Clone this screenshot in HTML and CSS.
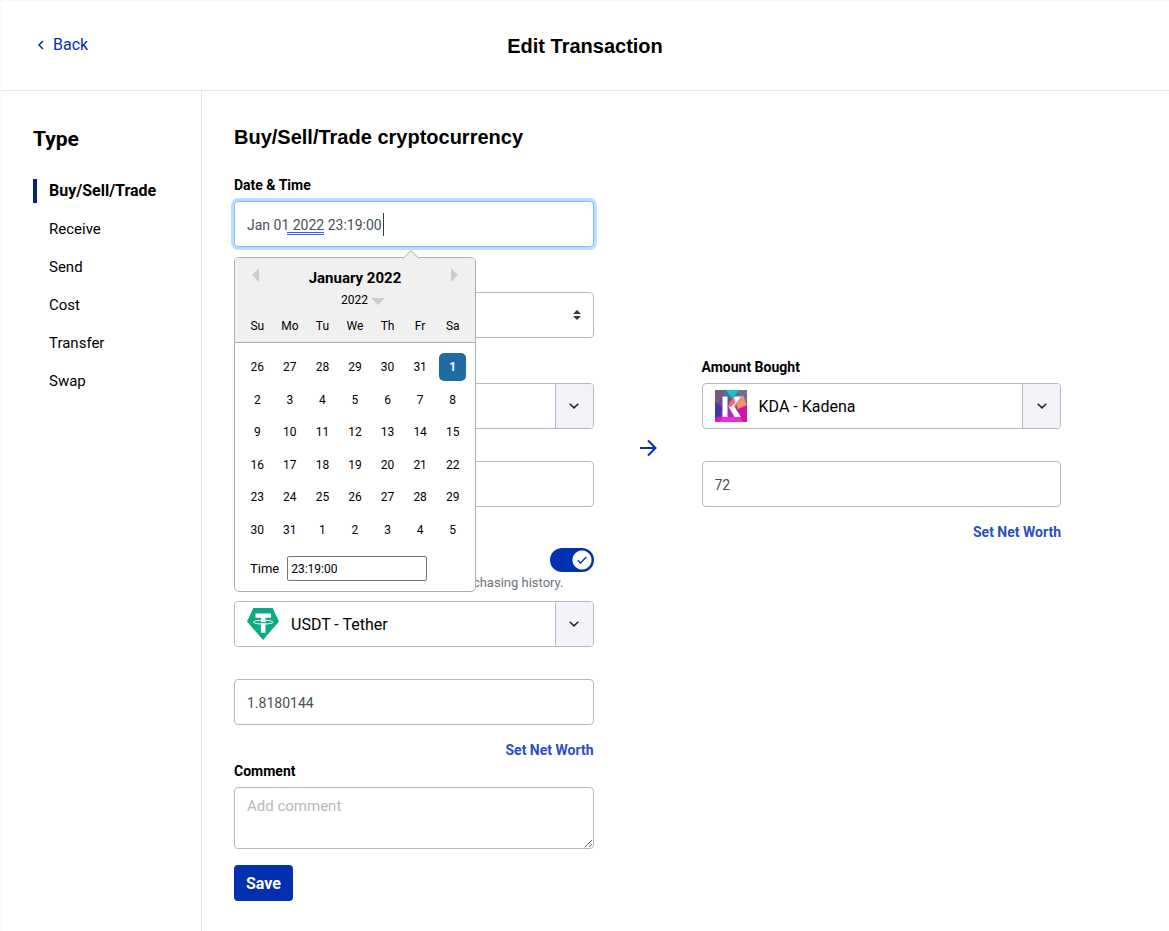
FILE: index.html
```html
<!DOCTYPE html>
<html lang="en">
<head>
<meta charset="utf-8">
<title>Edit Transaction</title>
<link rel="stylesheet" href="styles.css">
</head>
<body>
<div class="page">
  <header class="topbar">
    <a class="back" href="#"><svg width="8" height="10" viewBox="0 0 8 10"><path d="M6 1 2 5l4 4" fill="none" stroke="currentColor" stroke-width="1.5"/></svg>Back</a>
    <h1 class="title">Edit Transaction</h1>
  </header>
  <div class="body">
    <nav class="sidebar">
      <h2 class="side-title">Type</h2>
      <a class="side-link active" href="#">Buy/Sell/Trade</a>
      <a class="side-link" href="#">Receive</a>
      <a class="side-link" href="#">Send</a>
      <a class="side-link" href="#">Cost</a>
      <a class="side-link" href="#">Transfer</a>
      <a class="side-link" href="#">Swap</a>
    </nav>
    <main class="main">
      <h2 class="heading">Buy/Sell/Trade cryptocurrency</h2>
      <div class="half">
        <label class="label" for="date">Date &amp; Time</label>
        <div class="date-wrap">
          <input class="control focused" id="date" type="text" value="Jan 01 2022 23:19:00" spellcheck="false">
          <span class="grammar-mark"></span>
          <span class="caret"></span>
          <div class="picker">
            <svg class="picker-tip" width="18" height="9" viewBox="0 0 18 9"><path d="M0 9 9 0l9 9z" fill="#f0f0f0"/><path d="M1 8.500 9 .7l8 7.800" fill="none" stroke="#aeaeae"/></svg>
            <div class="picker-head">
              <div class="picker-nav">
                <button class="arrow-btn" type="button" aria-label="Previous month"><svg width="7" height="14" viewBox="0 0 7 14"><path d="M7 0v14L0 7z" fill="#ccc"/></svg></button>
                <div class="month">January 2022</div>
                <button class="arrow-btn" type="button" aria-label="Next month"><svg width="7" height="14" viewBox="0 0 7 14"><path d="M0 0v14l7-7z" fill="#ccc"/></svg></button>
              </div>
              <button class="year" type="button">2022<svg width="14" height="7" viewBox="0 0 14 7"><path d="M0 0h14L7 7z" fill="#ccc"/></svg></button>
              <div class="week"><span>Su</span><span>Mo</span><span>Tu</span><span>We</span><span>Th</span><span>Fr</span><span>Sa</span></div>
            </div>
            <div class="days">
              <button class="day">26</button><button class="day">27</button><button class="day">28</button><button class="day">29</button><button class="day">30</button><button class="day">31</button><button class="day selected">1</button>
              <button class="day">2</button><button class="day">3</button><button class="day">4</button><button class="day">5</button><button class="day">6</button><button class="day">7</button><button class="day">8</button>
              <button class="day">9</button><button class="day">10</button><button class="day">11</button><button class="day">12</button><button class="day">13</button><button class="day">14</button><button class="day">15</button>
              <button class="day">16</button><button class="day">17</button><button class="day">18</button><button class="day">19</button><button class="day">20</button><button class="day">21</button><button class="day">22</button>
              <button class="day">23</button><button class="day">24</button><button class="day">25</button><button class="day">26</button><button class="day">27</button><button class="day">28</button><button class="day">29</button>
              <button class="day">30</button><button class="day">31</button><button class="day">1</button><button class="day">2</button><button class="day">3</button><button class="day">4</button><button class="day">5</button>
            </div>
            <div class="time-row"><label for="time">Time</label><input class="time" id="time" type="text" value="23:19:00"></div>
          </div>
        </div>
        <div class="select-wrap">
          <select class="control" id="kind" aria-label="Trade type"><option></option></select>
          <svg class="updown" width="8" height="10" viewBox="0 0 8 10"><path d="M0 4 4 0l4 4zM0 6h8l-4 4z" fill="#343a40"/></svg>
        </div>
      </div>
      <div class="trade">
        <div class="side sold">
          <button class="coin" type="button" aria-label="Coin sold"><span class="coin-main"></span><span class="coin-toggle"><svg width="10" height="6" viewBox="0 0 10 6"><path d="m.7.7 4.300 4.200L9.300.7" fill="none" stroke="#212529" stroke-width="1.500"/></svg></span></button>
          <input class="control amount" type="text" aria-label="Amount sold">
          <div class="fee-row">
            <span class="switch"><input class="switch-box" type="checkbox" aria-label="Include fee" checked><svg class="switch-tick" width="10" height="8" viewBox="0 0 10 8"><path d="m.7 4.200 2.800 2.800L9.300 1" fill="none" stroke="#0330b0" stroke-width="1.300"/></svg></span></div>
          <p class="help">purchasing history.</p>
          <button class="coin" type="button"><span class="coin-main"><svg width="32" height="32" viewBox="0 0 32 32"><path d="M6.300 0h19.400L32 13.500 16 32 0 13.500z" fill="#0aab84"/><path d="M8.500 5.500h15.500v4.300h-5.500v15h-4.600v-15H8.500z" fill="#fff"/><path d="M13.800 12.300C9.200 12.500 6.500 13.200 6.500 14.200s4 1.900 9.700 1.900 9.700-.9 9.700-1.900-3-1.700-7.400-1.900" fill="none" stroke="#fff"/><path d="M13.800 14.700h4.600" stroke="#0aab84"/></svg>USDT - Tether</span><span class="coin-toggle"><svg width="10" height="6" viewBox="0 0 10 6"><path d="m.7.7 4.300 4.200L9.300.7" fill="none" stroke="#212529" stroke-width="1.500"/></svg></span></button>
          <input class="control amount" type="text" value="1.8180144" aria-label="Fee amount">
          <a class="worth" href="#">Set Net Worth</a>
        </div>
        <svg class="arrow" width="18" height="18" viewBox="0 0 18 18"><path d="M1 9h15M9 1.500 16.500 9 9 16.500" fill="none" stroke="#0330b0" stroke-width="2"/></svg>
        <div class="side">
          <label class="label" for="bought">Amount Bought</label>
          <button class="coin" id="bought" type="button"><span class="coin-main"><svg width="32" height="32" viewBox="0 0 32 32"><defs><linearGradient id="kg" x1="0" y1="0" x2="0" y2="1"><stop offset="0" stop-color="#2f8dad"/><stop offset=".35" stop-color="#70488f"/><stop offset=".7" stop-color="#a82cae"/><stop offset="1" stop-color="#e512c8"/></linearGradient></defs><path d="M0 0h32v32H0z" fill="url(#kg)"/><path d="M0 0h11L7 9 0 14z" fill="#75597f"/><path d="M0 12l8 6-2 8-6 2z" fill="#403b9c"/><path d="M11 0h13l-7 9z" fill="#22bdc4"/><path d="M24 0h8v11l-10-3z" fill="#6c718f"/><path d="M20 12l8-7 4 10-8 7z" fill="#e79670"/><path d="M14 12l9-5-2 10-6 2z" fill="#ee5a86"/><path d="M32 15v17h-8l-3-12z" fill="#d313a3"/><path d="M8 27h17l4 5H4z" fill="#f02bd9"/><path d="M7.500 6.500h5V27h-5zM19.500 6.500H26L19 16l7 11h-6.500l-6-10.500z" fill="#fff"/><path d="M12.500 17l6.500-9.500 1.500 5-4 4z" fill="#f56783"/></svg>KDA - Kadena</span><span class="coin-toggle"><svg width="10" height="6" viewBox="0 0 10 6"><path d="m.7.7 4.300 4.200L9.300.7" fill="none" stroke="#212529" stroke-width="1.500"/></svg></span></button>
          <input class="control amount" type="text" value="72" aria-label="Amount bought">
          <a class="worth" href="#">Set Net Worth</a>
        </div>
      </div>
      <div class="half">
        <label class="label" for="comment">Comment</label>
        <textarea class="control comment" id="comment" placeholder="Add comment"></textarea>
        <button class="save" type="button">Save</button>
      </div>
    </main>
  </div>
</div>
</body>
</html>
```
FILE: styles.css
```css
* { box-sizing: border-box; }
body { margin: 0; background: #f8f9fa; color: #000; font: 15px/24px Roboto, sans-serif; }
button, input, select, textarea { font-family: inherit; margin: 0; }
svg { flex: none; }
a { text-decoration: none; color: #2a4fc0; }
.page { margin: 1px 0 0 1px; background: #fff; border-radius: 4px 0 0 0; min-height: calc(100vh - 1px); display: flex; flex-direction: column; }
.topbar { display: grid; grid-template-columns: 1fr auto 1fr; align-items: center; height: 90px; padding: 0 36px; border-bottom: 1px solid #e4e4e4; }
.back { display: flex; align-items: center; gap: 8px; color: #0330b0; font-size: 16px; padding-bottom: 2px; }
.title { margin: 0; font: bold 20px/24px "Liberation Sans", sans-serif; }
.body { display: flex; flex: 1; }
.sidebar { width: 201px; flex: none; padding: 36px 0 0 32px; border-right: 1px solid #e4e4e4; display: flex; flex-direction: column; gap: 14px; }
.side-title { margin: 0 0 14px; font: bold 21px/24px Roboto, sans-serif; }
.side-link { color: #000; padding-left: 16px; }
.side-link.active { font-size: 16px; font-weight: bold; border-left: 4px solid #012585; padding-left: 12px; }
.main { flex: 1; padding: 34px 108px 28px 32px; }
.heading { margin: 0 0 26px; font: bold 20px/24px "Liberation Sans", sans-serif; }
.half { width: calc((100% - 108px) / 2); display: flex; flex-direction: column; align-items: stretch; }
.label { display: block; font-size: 14px; font-weight: bold; line-height: 20px; margin-bottom: 6px; }
.control { display: block; width: 100%; height: 46px; padding: 2px 12px 0; border: 1px solid #b5b9c4; border-radius: 4px; background: #fff; color: #495057; font-size: 14px; outline: 0; }
.date-wrap, .select-wrap { position: relative; }
.select-wrap { margin-top: 45px; }
.focused { border-color: #80bdff; box-shadow: 0 0 0 3px #bfdeff; }
.grammar-mark { position: absolute; left: 53px; top: 31px; width: 37px; height: 3px; border-top: 1px solid #335cff; border-bottom: 1px solid #335cff; }
.caret { position: absolute; left: 149px; top: 12px; width: 1px; height: 23px; background: #343a40; }
.select-wrap .control { appearance: none; }
.updown { position: absolute; right: 13px; top: 18px; }
.picker { position: absolute; z-index: 2; left: 0; top: 56px; width: 242px; border: 1px solid #aeaeae; border-radius: 5px; background: #fff; font-size: 13px; }
.picker-tip { position: absolute; left: 167px; top: -8px; }
.picker-head { background: #f0f0f0; border-bottom: 1px solid #aeaeae; border-radius: 4px 4px 0 0; padding: 8px 0 6px; display: flex; flex-direction: column; align-items: center; }
.picker-nav { display: flex; justify-content: space-between; width: 100%; padding: 0 17px; }
.month { font: bold 15px/24px Roboto, sans-serif; }
.arrow-btn, .year, .day { border: 0; background: none; padding: 0; color: #000; }
.arrow-btn { display: flex; align-items: flex-start; padding-top: 2px; }
.year { display: flex; align-items: center; gap: 3px; font-size: 12px; line-height: 20px; padding-left: 16px; }
.year svg { margin-top: 3px; }
.week, .days { display: grid; grid-template-columns: repeat(7, 1fr); width: 100%; padding: 0 6px; text-align: center; }
.week { font-size: 12px; line-height: 20px; margin-top: 6px; }
.days { grid-template-rows: repeat(6, 1fr); height: 195px; margin-top: 8px; place-items: center; }
.day { width: 27px; height: 28px; border-radius: 5px; font-size: 12px; }
.day.selected { background: #216ba5; color: #fff; font-weight: bold; }
.time-row { display: flex; align-items: center; gap: 8px; padding: 10px 0 10px 15px; font-size: 13px; line-height: 25px; }
.time { width: 140px; height: 25px; border: 1px solid #767676; border-radius: 2px; padding: 0 3px; font-size: 12px; }
.trade { display: grid; grid-template-columns: 1fr 108px 1fr; padding-top: 19px; }
.side { display: flex; flex-direction: column; }
.sold { padding-top: 26px; }
.coin { display: flex; height: 46px; padding: 0; border: 1px solid #b5b9c4; border-radius: 4px; background: #fff; overflow: hidden; font-size: 16px; color: #000; text-align: left; }
.coin-main { flex: 1; display: flex; align-items: center; gap: 12px; padding: 0 12px; }
.coin-toggle { width: 38px; display: flex; align-items: center; justify-content: center; background: #f2f3f9; border-left: 1px solid #b5b9c4; }
.amount { margin-top: 32px; }
.arrow { justify-self: center; margin-top: 82px; }
.worth { align-self: flex-end; margin-top: 15px; font-size: 14px; font-weight: bold; line-height: 20px; }
.fee-row { display: flex; align-items: center; justify-content: flex-end; height: 24px; margin-top: 41px; }
.switch { position: relative; display: flex; }
.switch-box { appearance: none; width: 44px; height: 24px; border-radius: 12px; background: radial-gradient(circle at 32px 12px, #fff 9px, #0330b0 10px); }
.switch-tick { position: absolute; right: 7px; top: 8px; }
.help { margin: 0 0 7px; padding-right: 30px; text-align: right; color: #6c757d; font-size: 13px; line-height: 22px; }
.comment { height: 62px; padding: 6px 12px; font-size: 15px; line-height: 24px; resize: vertical; }
.comment::placeholder { color: #b4b9be; }
.trade + .half { padding-top: 1px; }
.save { align-self: flex-start; margin-top: 16px; height: 36px; padding: 0 12px; border: 0; border-radius: 4px; background: #0330b0; color: #fff; font-size: 16px; font-weight: bold; }
```
